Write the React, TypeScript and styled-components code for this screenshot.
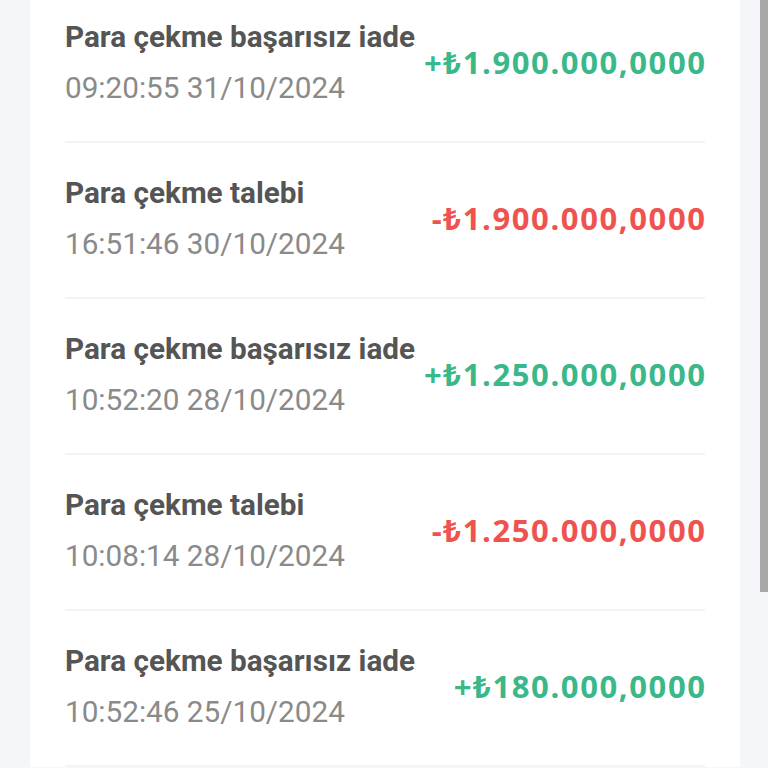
import React from "react";
import styled, { createGlobalStyle } from "styled-components";

const GlobalStyle = createGlobalStyle`
  html, body {
    margin: 0;
    padding: 0;
    background: #f5f6fa;
    overflow: hidden;
  }
  body {
    font-family: Roboto, "Noto Sans", sans-serif;
  }
`;

const Page = styled.div`
  height: 768px;
  padding-left: 30px;
  position: relative;
  overflow: hidden;
`;

const Card = styled.div`
  width: 710px;
  margin-top: -13px;
  background: #ffffff;
  padding: 0 35px;
  box-sizing: border-box;
`;

const Row = styled.div`
  display: flex;
  align-items: center;
  justify-content: space-between;
  height: 156px;
  padding-bottom: 4px;
  box-sizing: border-box;
  border-bottom: 2px solid #f4f4f5;
`;

const Info = styled.div`
  display: flex;
  flex-direction: column;
  gap: 15px;
`;

const Title = styled.div`
  font-size: 29.7px;
  line-height: 36px;
  font-weight: 700;
  color: #555555;
`;

const Time = styled.div`
  font-size: 29.7px;
  line-height: 36px;
  font-weight: 400;
  color: #8a8a8a;
`;

const Amount = styled.div<{ $positive: boolean }>`
  font-family: "Open Sans", "Noto Sans", sans-serif;
  font-size: 31px;
  font-weight: 700;
  letter-spacing: 1.6px;
  margin-right: -1.6px;
  color: ${(p) => (p.$positive ? "#3bb88a" : "#ef5350")};
  white-space: nowrap;
`;

const ScrollThumb = styled.div`
  position: absolute;
  top: 0;
  right: 0;
  width: 8px;
  height: 592px;
  background: #a8a8a8;
`;

const items = [
  { title: "Para çekme başarısız iade", time: "09:20:55 31/10/2024", amount: "+₺1.900.000,0000", positive: true },
  { title: "Para çekme talebi", time: "16:51:46 30/10/2024", amount: "-₺1.900.000,0000", positive: false },
  { title: "Para çekme başarısız iade", time: "10:52:20 28/10/2024", amount: "+₺1.250.000,0000", positive: true },
  { title: "Para çekme talebi", time: "10:08:14 28/10/2024", amount: "-₺1.250.000,0000", positive: false },
  { title: "Para çekme başarısız iade", time: "10:52:46 25/10/2024", amount: "+₺180.000,0000", positive: true },
];

const App: React.FC = () => {
  return (
    <>
      <GlobalStyle />
      <Page>
        <Card>
          {items.map((item) => (
            <Row key={item.time}>
              <Info>
                <Title>{item.title}</Title>
                <Time>{item.time}</Time>
              </Info>
              <Amount $positive={item.positive}>{item.amount}</Amount>
            </Row>
          ))}
        </Card>
        <ScrollThumb />
      </Page>
    </>
  );
};

export default App;
